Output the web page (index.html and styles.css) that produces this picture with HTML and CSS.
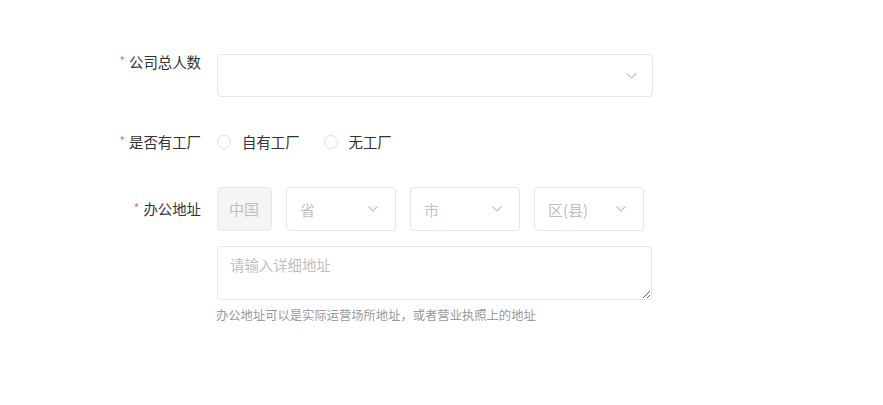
FILE: index.html
```html
<!DOCTYPE html>
<html lang="zh-CN">
<head>
<meta charset="utf-8">
<title>表单</title>
<link rel="stylesheet" href="styles.css">
</head>
<body>
<form class="form">
  <div class="row row-count">
    <label class="label label-top"><span class="star">*</span>公司总人数</label>
    <div class="control">
      <div class="select select-wide">
        <span class="value"></span>
        <svg class="chev" width="11" height="6" viewBox="0 0 11 6"><path d="M0.5 0.5 L5.5 5 L10.5 0.5" fill="none" stroke="#c0c4cc" stroke-width="1.2"/></svg>
      </div>
    </div>
  </div>

  <div class="row row-factory">
    <label class="label"><span class="star">*</span>是否有工厂</label>
    <div class="control radios">
      <label class="radio"><span class="circle"></span><span class="rtext">自有工厂</span></label>
      <label class="radio"><span class="circle"></span><span class="rtext">无工厂</span></label>
    </div>
  </div>

  <div class="row row-address">
    <label class="label label-mid"><span class="star">*</span>办公地址</label>
    <div class="control">
      <div class="addr">
        <div class="country">中国</div>
        <div class="select select-small">
          <span class="ph">省</span>
          <svg class="chev" width="10" height="6" viewBox="0 0 10 6"><path d="M0.5 0.5 L5 5 L9.5 0.5" fill="none" stroke="#c0c4cc" stroke-width="1.2"/></svg>
        </div>
        <div class="select select-small">
          <span class="ph">市</span>
          <svg class="chev" width="10" height="6" viewBox="0 0 10 6"><path d="M0.5 0.5 L5 5 L9.5 0.5" fill="none" stroke="#c0c4cc" stroke-width="1.2"/></svg>
        </div>
        <div class="select select-small">
          <span class="ph">区(县)</span>
          <svg class="chev" width="10" height="6" viewBox="0 0 10 6"><path d="M0.5 0.5 L5 5 L9.5 0.5" fill="none" stroke="#c0c4cc" stroke-width="1.2"/></svg>
        </div>
      </div>
      <textarea class="detail" placeholder="请输入详细地址"></textarea>
      <div class="help">办公地址可以是实际运营场所地址，或者营业执照上的地址</div>
    </div>
  </div>
</form>
</body>
</html>
```
FILE: styles.css
```css
html, body {
  margin: 0;
  padding: 0;
  background: #ffffff;
}
body {
  font-family: "Noto Sans CJK SC", "Noto Sans", sans-serif;
  font-size: 14px;
  color: #333333;
}
.form {
  padding-top: 54px;
  display: flex;
  flex-direction: column;
}
.row {
  display: flex;
  align-items: flex-start;
}
.row-factory {
  margin-top: 35px;
}
.row-address {
  margin-top: 34px;
}
.label {
  width: 201px;
  box-sizing: border-box;
  margin-right: 16px;
  text-align: right;
  font-size: 14.4px;
  line-height: 16px;
  color: #333333;
  flex: none;
}
.star {
  color: #f56c6c;
  font-size: 12px;
  margin-right: 4px;
  position: relative;
  top: -2px;
}
.label-mid {
  line-height: 44px;
}
.row-factory .label {
  line-height: 20px;
}
.control {
  display: flex;
  flex-direction: column;
}
.select {
  box-sizing: border-box;
  height: 43px;
  border: 1px solid #e6e6e6;
  border-radius: 4px;
  display: flex;
  align-items: center;
  justify-content: space-between;
  padding: 0 15px 0 14px;
  background: #fff;
}
.select-wide {
  width: 436px;
}
.select-small {
  width: 110px;
  height: 44px;
  padding: 0 17px 0 13px;
}
.ph {
  color: #bfbfbf;
  font-size: 15px;
}
.chev {
  display: block;
  flex: none;
}
.radios {
  flex-direction: row;
  align-items: center;
  height: 20px;
  gap: 24px;
}
.radio {
  display: flex;
  align-items: center;
  gap: 11px;
  color: #333;
  font-size: 14.4px;
  line-height: 20px;
}
.circle {
  width: 14px;
  height: 14px;
  box-sizing: border-box;
  border: 1px solid #e0e0e0;
  border-radius: 50%;
  background: #fff;
}
.addr {
  display: flex;
  gap: 14px;
}
.country {
  box-sizing: border-box;
  width: 55px;
  height: 44px;
  background: #f5f5f5;
  border: 1px solid #e8e8e8;
  border-radius: 4px;
  color: #bfbfbf;
  font-size: 15px;
  line-height: 42px;
  padding-left: 11px;
}
.detail {
  box-sizing: border-box;
  margin: 15px 0 0 0;
  width: 435px;
  height: 54px;
  border: 1px solid #e6e6e6;
  border-radius: 4px;
  padding: 8px 12px;
  font-family: "Noto Sans CJK SC", "Noto Sans", sans-serif;
  font-size: 14.4px;
  line-height: 20px;
  color: #333;
  outline: none;
  resize: vertical;
}
.detail::placeholder {
  color: #bfbfbf;
}
.help {
  margin-top: 6px;
  font-size: 12.3px;
  line-height: 18px;
  color: #999999;
  margin-left: -1px;
}
```
